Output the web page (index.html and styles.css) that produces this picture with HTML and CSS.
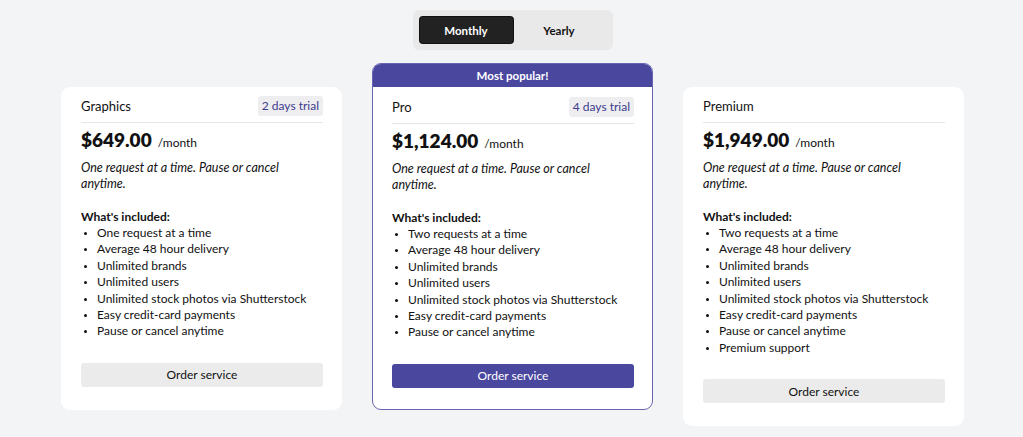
FILE: index.html
```html
<!DOCTYPE html>
<html>
<head>
<meta charset="utf-8">
<link rel="stylesheet" href="styles.css">
</head>
<body>
<div class="page">
  <div class="toggle">
    <button class="toggle-btn active">Monthly</button>
    <button class="toggle-btn">Yearly</button>
  </div>
  <div class="cards">
    <div class="card">
      <div class="card-head">
        <span class="plan">Graphics</span>
        <span class="trial">2 days trial</span>
      </div>
      <div class="price"><span class="amount">$649.00</span><span class="per">/month</span></div>
      <p class="desc">One request at a time. Pause or cancel anytime.</p>
      <div class="incl">What's included:</div>
      <ul class="features">
        <li>One request at a time</li>
        <li>Average 48 hour delivery</li>
        <li>Unlimited brands</li>
        <li>Unlimited users</li>
        <li>Unlimited stock photos via Shutterstock</li>
        <li>Easy credit-card payments</li>
        <li>Pause or cancel anytime</li>
      </ul>
      <button class="order">Order service</button>
    </div>
    <div class="card popular">
      <div class="banner">Most popular!</div>
      <div class="card-body">
        <div class="card-head">
          <span class="plan">Pro</span>
          <span class="trial">4 days trial</span>
        </div>
        <div class="price"><span class="amount">$1,124.00</span><span class="per">/month</span></div>
        <p class="desc">One request at a time. Pause or cancel anytime.</p>
        <div class="incl">What's included:</div>
        <ul class="features">
          <li>Two requests at a time</li>
          <li>Average 48 hour delivery</li>
          <li>Unlimited brands</li>
          <li>Unlimited users</li>
          <li>Unlimited stock photos via Shutterstock</li>
          <li>Easy credit-card payments</li>
          <li>Pause or cancel anytime</li>
        </ul>
        <button class="order primary">Order service</button>
      </div>
    </div>
    <div class="card">
      <div class="card-head">
        <span class="plan">Premium</span>
      </div>
      <div class="price"><span class="amount">$1,949.00</span><span class="per">/month</span></div>
      <p class="desc">One request at a time. Pause or cancel anytime.</p>
      <div class="incl">What's included:</div>
      <ul class="features">
        <li>Two requests at a time</li>
        <li>Average 48 hour delivery</li>
        <li>Unlimited brands</li>
        <li>Unlimited users</li>
        <li>Unlimited stock photos via Shutterstock</li>
        <li>Easy credit-card payments</li>
        <li>Pause or cancel anytime</li>
        <li>Premium support</li>
      </ul>
      <button class="order">Order service</button>
    </div>
  </div>
</div>
</body>
</html>
```

FILE: styles.css
```css
* { box-sizing: border-box; }
html, body { margin: 0; padding: 0; }
body {
  background: #f3f4f6;
  font-family: "Lato", "Noto Sans", sans-serif;
  color: #111;
  font-size: 12px;
}
.page {
  display: flex;
  flex-direction: column;
  align-items: center;
  padding-top: 10px;
  padding-left: 2px;
}
.toggle {
  display: flex;
  padding: 7px;
  background: #e9e9ea;
  border-radius: 6px;
  width: 200px;
}
.toggle-btn {
  flex: 1;
  height: 26px;
  border: none;
  background: transparent;
  font-family: inherit;
  font-size: 11.5px;
  font-weight: 700;
  color: #111;
  border-radius: 3px;
  cursor: pointer;
}
.toggle-btn.active {
  background: #222;
  color: #fff;
  box-shadow: 0 0 0 1px #111;
}
.cards {
  display: flex;
  align-items: flex-start;
  gap: 30px;
  margin-top: 37px;
}
.card {
  width: 281px;
  background: #fff;
  border-radius: 9px;
  padding: 9px 19px 23px 20px;
}
.card.popular {
  padding: 0;
  margin-top: -24px;
  border: 1px solid #6866b3;
  overflow: hidden;
}
.banner {
  background: #4a479f;
  color: #fff;
  font-weight: 700;
  font-size: 11.5px;
  text-align: center;
  height: 23px;
  line-height: 23px;
}
.card-body {
  padding: 10px 18px 21px 19px;
}
.card-head {
  display: flex;
  justify-content: space-between;
  align-items: center;
  height: 20px;
}
.plan { font-size: 13px; }
.trial {
  background: #eeeef1;
  color: #3d3b8e;
  padding: 0 4px;
  height: 20px;
  line-height: 20px;
  border-radius: 3px;
  font-size: 12px;
}
.price {
  border-top: 1px solid #e6e6e6;
  margin-top: 6px;
  padding-top: 5px;
  display: flex;
  align-items: baseline;
  gap: 6px;
}
.amount {
  font-size: 19px;
  font-weight: 800;
  line-height: 24px;
}
.per { font-size: 12px; }
.desc {
  margin: 8px 0 0;
  font-style: italic;
  font-size: 12.5px;
  line-height: 16px;
}
.incl {
  margin-top: 17px;
  font-weight: 700;
  font-size: 12px;
  line-height: 16px;
}
.features {
  margin: 0;
  padding-left: 16px;
  line-height: 16.4px;
}
.features li::marker {
  font-size: 9px;
}
.order {
  display: block;
  width: 100%;
  margin-top: 23px;
  height: 24px;
  border: none;
  border-radius: 3px;
  background: #ebebeb;
  font-family: inherit;
  font-size: 12px;
  color: #111;
}
.order.primary {
  background: #4a479f;
  color: #fff;
}
```
